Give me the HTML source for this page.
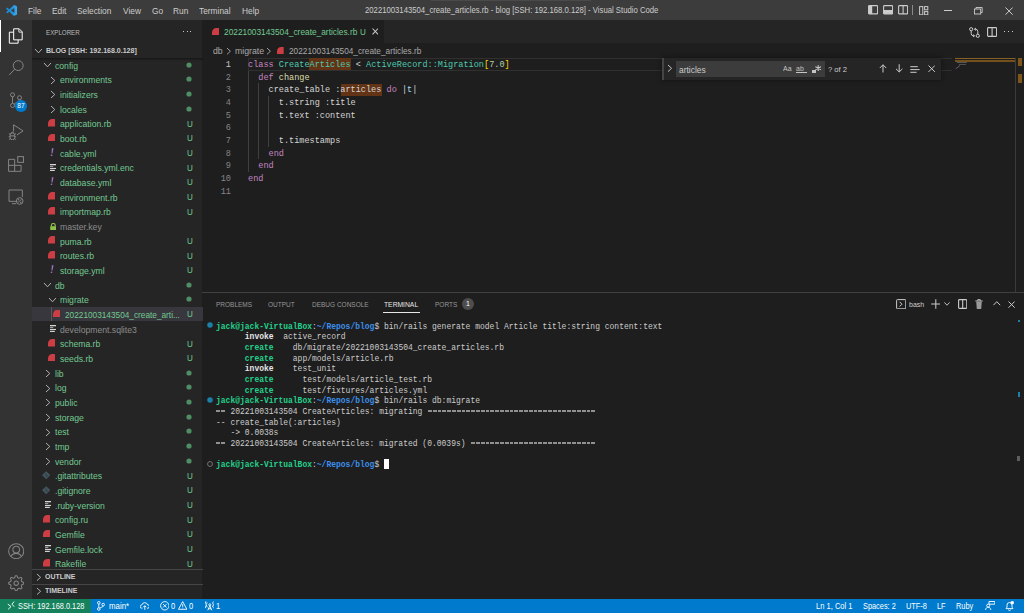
<!DOCTYPE html><html><head><meta charset="utf-8"><style>html,body{margin:0;padding:0;width:1024px;height:613px;overflow:hidden;background:#1e1e1e;}svg{display:block}</style></head><body><div style="position:relative;width:1024px;height:613px;overflow:hidden">
<div style="position:absolute;left:0px;top:0px;width:1024px;height:20px;background:#3c3c3c;"></div>
<svg style="position:absolute;left:6px;top:4.7px;overflow:visible" width="11.2" height="10.9" viewBox="0 0 100 100"><defs><linearGradient id="vg" x1="0" x2="1" y1="0" y2="0"><stop offset="0" stop-color="#1b86d0"/><stop offset="0.5" stop-color="#1f8fd8"/><stop offset="1" stop-color="#3aaaf2"/></linearGradient></defs><path fill="url(#vg)" d="M96.46 10.79 75.86.87a6.23 6.23 0 0 0-7.1 1.2L29.35 38.04 12.19 25.01a4.16 4.16 0 0 0-5.32.24L1.36 30.26a4.17 4.17 0 0 0 0 6.16L16.25 50 1.35 63.58a4.17 4.17 0 0 0 0 6.16l5.51 5.01a4.16 4.16 0 0 0 5.32.24l17.16-13.03 39.41 35.96a6.22 6.22 0 0 0 7.1 1.2l20.6-9.91A6.25 6.25 0 0 0 100 83.59V16.41a6.25 6.25 0 0 0-3.54-5.62zM75.02 72.7 45.11 50l29.9-22.7z"/></svg>
<div style="position:absolute;left:28.299999999999997px;top:5.86px;height:11.27px;line-height:11.27px;font-family:'Liberation Sans', sans-serif;font-size:8.67px;color:#cccccc;font-weight:normal;white-space:pre;transform:scaleX(0.9631);transform-origin:0 50%;">File</div>
<div style="position:absolute;left:52.1px;top:5.86px;height:11.27px;line-height:11.27px;font-family:'Liberation Sans', sans-serif;font-size:8.67px;color:#cccccc;font-weight:normal;white-space:pre;transform:scaleX(0.9631);transform-origin:0 50%;">Edit</div>
<div style="position:absolute;left:77.2px;top:5.86px;height:11.27px;line-height:11.27px;font-family:'Liberation Sans', sans-serif;font-size:8.67px;color:#cccccc;font-weight:normal;white-space:pre;transform:scaleX(0.9631);transform-origin:0 50%;">Selection</div>
<div style="position:absolute;left:122.60000000000001px;top:5.86px;height:11.27px;line-height:11.27px;font-family:'Liberation Sans', sans-serif;font-size:8.67px;color:#cccccc;font-weight:normal;white-space:pre;transform:scaleX(0.9631);transform-origin:0 50%;">View</div>
<div style="position:absolute;left:151.9px;top:5.86px;height:11.27px;line-height:11.27px;font-family:'Liberation Sans', sans-serif;font-size:8.67px;color:#cccccc;font-weight:normal;white-space:pre;transform:scaleX(0.9631);transform-origin:0 50%;">Go</div>
<div style="position:absolute;left:173.4px;top:5.86px;height:11.27px;line-height:11.27px;font-family:'Liberation Sans', sans-serif;font-size:8.67px;color:#cccccc;font-weight:normal;white-space:pre;transform:scaleX(0.9631);transform-origin:0 50%;">Run</div>
<div style="position:absolute;left:198.9px;top:5.86px;height:11.27px;line-height:11.27px;font-family:'Liberation Sans', sans-serif;font-size:8.67px;color:#cccccc;font-weight:normal;white-space:pre;transform:scaleX(0.9631);transform-origin:0 50%;">Terminal</div>
<div style="position:absolute;left:242.20000000000002px;top:5.86px;height:11.27px;line-height:11.27px;font-family:'Liberation Sans', sans-serif;font-size:8.67px;color:#cccccc;font-weight:normal;white-space:pre;transform:scaleX(0.9631);transform-origin:0 50%;">Help</div>
<div style="position:absolute;left:365.2px;top:5.18px;height:11.44px;line-height:11.44px;font-family:'Liberation Sans', sans-serif;font-size:8.8px;color:#cccccc;font-weight:normal;white-space:pre;transform:scaleX(0.8773);transform-origin:0 50%;">20221003143504_create_articles.rb - blog [SSH: 192.168.0.128] - Visual Studio Code</div>
<div style="position:absolute;left:431px;top:0px;width:160px;height:1px;background:#4a4a4a;"></div>
<svg style="position:absolute;left:868px;top:5.3px;" width="10.3" height="9.6" viewBox="0 0 10.3 9.6"><rect x="0.6" y="0.6" width="9" height="8.3" fill="none" stroke="#cccccc" stroke-width="1.1" rx="0.6"/><rect x="0.6" y="0.6" width="3.6" height="8.3" fill="#cccccc"/></svg>
<svg style="position:absolute;left:883px;top:5.3px;" width="10.3" height="9.6" viewBox="0 0 10.3 9.6"><rect x="0.6" y="0.6" width="9" height="8.3" fill="none" stroke="#cccccc" stroke-width="1.1" rx="0.6"/><rect x="0.6" y="5" width="9" height="3.9" fill="#cccccc"/></svg>
<svg style="position:absolute;left:897.8px;top:5.3px;" width="10.3" height="9.6" viewBox="0 0 10.3 9.6"><rect x="0.6" y="0.6" width="9" height="8.3" fill="none" stroke="#cccccc" stroke-width="1.1" rx="0.6"/><line x1="5.1" y1="0.6" x2="5.1" y2="8.9" stroke="#cccccc" stroke-width="1.1"/></svg>
<div style="position:absolute;left:912.4px;top:4.8px;width:1px;height:10.4px;background:#8a8a8a;"></div>
<svg style="position:absolute;left:919px;top:5.5px;" width="9.5" height="9.5" viewBox="0 0 9.5 9.5"><rect x="0.6" y="0.6" width="3.2" height="8.2" fill="none" stroke="#cccccc" stroke-width="1"/><rect x="5.6" y="0.6" width="3.2" height="3.2" fill="none" stroke="#cccccc" stroke-width="1"/><rect x="5.6" y="5.6" width="3.2" height="3.2" fill="none" stroke="#cccccc" stroke-width="1"/></svg>
<div style="position:absolute;left:944px;top:10px;width:7.6px;height:0.9px;background:#cccccc;"></div>
<svg style="position:absolute;left:974px;top:7px;" width="9" height="7.5" viewBox="0 0 9 7.5"><rect x="0.5" y="2" width="6.2" height="5" fill="none" stroke="#cccccc" stroke-width="0.9"/><path d="M2 2 V0.5 H8.2 V5.5 H6.7" fill="none" stroke="#cccccc" stroke-width="0.9"/></svg>
<svg style="position:absolute;left:1004.8px;top:6.5px;" width="8.2" height="8.2" viewBox="0 0 8.2 8.2"><path d="M0.5 0.5 L7.7 7.7 M7.7 0.5 L0.5 7.7" stroke="#cccccc" stroke-width="1"/></svg>
<div style="position:absolute;left:0px;top:20px;width:32px;height:578.6px;background:#333333;"></div>
<div style="position:absolute;left:0px;top:20px;width:1.4px;height:32px;background:#ffffff;"></div>
<svg style="position:absolute;left:8px;top:28px;" width="16" height="16" viewBox="0 0 24 24"><g fill="none" stroke="#ffffff" stroke-width="1.5" stroke-linejoin="miter"><path d="M8.5 1.2 H16.8 L21.3 5.7 V17.8 H8.5 Z"/><path d="M16.3 1.4 V6.2 H21.1" stroke-width="1.2"/><path d="M7.5 6.3 H2 V22.8 H15.2 V17.8"/></g></svg>
<svg style="position:absolute;left:8px;top:60px;" width="16" height="16" viewBox="0 0 24 24"><g fill="none" stroke="#858585" stroke-width="1.5"><circle cx="15.3" cy="8.4" r="7.4"/><path d="M10 13.8 L1.8 22.6"/></g></svg>
<svg style="position:absolute;left:8px;top:92px;" width="16" height="16" viewBox="0 0 24 24"><g fill="none" stroke="#858585" stroke-width="1.5"><circle cx="6.8" cy="4.2" r="3"/><circle cx="17.3" cy="8.6" r="3"/><circle cx="6.8" cy="20.2" r="3"/><path d="M6.8 7.2 V17.2 M17.3 11.6 C17.3 15 12 15.5 9 18.3"/></g></svg>
<div style="position:absolute;left:15.2px;top:100px;width:11.6px;height:11.6px;border-radius:50%;background:#007acc;color:#fff;font-family:'Liberation Sans', sans-serif;font-size:6.6px;line-height:11.6px;text-align:center">87</div>
<svg style="position:absolute;left:8px;top:124px;" width="16" height="16" viewBox="0 0 24 24"><g fill="none" stroke="#858585" stroke-width="1.5" stroke-linejoin="miter"><path d="M8.4 11.2 V1.2 L22.6 10.4 L13.4 16.4"/><path d="M3.3 16.6 A3.3 3.3 0 0 1 9.9 16.6 V20.2 A3.3 3.6 0 0 1 3.3 20.2 Z M3.3 17.8 H9.9 M4.8 14.2 A1.8 1.8 0 0 1 8.4 14.2 M3.3 15.6 L1.2 14.4 M9.9 15.6 L12 14.4 M3.3 19.2 H1 M9.9 19.2 H12.2 M3.5 22 L1.4 23.2 M9.7 22 L11.8 23.2"/></g></svg>
<svg style="position:absolute;left:8px;top:156px;" width="16" height="16" viewBox="0 0 24 24"><g fill="none" stroke="#858585" stroke-width="1.5"><path d="M0.9 5 H10 V14 H19.6 V23 H0.9 Z M0.9 14 H10 V23"/><rect x="14.6" y="0.9" width="8.6" height="8.6"/></g></svg>
<svg style="position:absolute;left:8px;top:189px;" width="16" height="16" viewBox="0 0 24 24"><g fill="none" stroke="#858585" stroke-width="1.5"><path d="M14 18.5 H1.5 V1.5 H21.5 V12"/><path d="M6 22 H12"/><circle cx="17.5" cy="18" r="5"/><path d="M15 20.5 L20 15.5 M15.5 17 V15.5 H17 M19.5 19 V20.5 H18"/></g></svg>
<svg style="position:absolute;left:7.8px;top:542.9px;" width="16.4" height="16.4" viewBox="0 0 24 24"><g fill="none" stroke="#858585" stroke-width="1.5"><circle cx="12" cy="12" r="11"/><circle cx="12" cy="9.6" r="4.9"/><path d="M4.4 19.9 C5.8 16.2 8.8 15.2 12 15.2 C15.2 15.2 18.2 16.2 19.6 19.9"/></g></svg>
<svg style="position:absolute;left:7.8px;top:574.6px;" width="16.4" height="16.4" viewBox="0 0 24 24"><g fill="none" stroke="#858585" stroke-width="1.5" stroke-linejoin="round"><polygon points="10.92,1.05 13.08,1.05 14.41,4.06 15.91,4.68 18.98,3.50 20.50,5.02 19.32,8.09 19.94,9.59 22.95,10.92 22.95,13.08 19.94,14.41 19.32,15.91 20.50,18.98 18.98,20.50 15.91,19.32 14.41,19.94 13.08,22.95 10.92,22.95 9.59,19.94 8.09,19.32 5.02,20.50 3.50,18.98 4.68,15.91 4.06,14.41 1.05,13.08 1.05,10.92 4.06,9.59 4.68,8.09 3.50,5.02 5.02,3.50 8.09,4.68 9.59,4.06"/><circle cx="12" cy="12" r="3.2"/></g></svg>
<div style="position:absolute;left:32px;top:20px;width:170.4px;height:578.6px;background:#252526;"></div>
<div style="position:absolute;left:45.8px;top:27.76px;height:10.27px;line-height:10.27px;font-family:'Liberation Sans', sans-serif;font-size:7.9px;color:#bbbbbb;font-weight:normal;white-space:pre;transform:scaleX(0.7848);transform-origin:0 50%;">EXPLORER</div>
<div style="position:absolute;left:182.95px;top:30.9px;width:1.15px;height:1.15px;background:#c5c5c5;"></div>
<div style="position:absolute;left:186.85px;top:30.9px;width:1.15px;height:1.15px;background:#c5c5c5;"></div>
<div style="position:absolute;left:190.35px;top:30.9px;width:1.15px;height:1.15px;background:#c5c5c5;"></div>
<svg style="position:absolute;left:34.1px;top:47.6px;" width="9.0" height="5.8" viewBox="0 0 9.0 5.8"><path d="M1 1 L4.5 4.8 L8.0 1" fill="none" stroke="#b8b8b8" stroke-width="0.95"/></svg>
<div style="position:absolute;left:45.7px;top:45.77px;height:10.27px;line-height:10.27px;font-family:'Liberation Sans', sans-serif;font-size:7.9px;color:#cccccc;font-weight:bold;white-space:pre;transform:scaleX(0.8924);transform-origin:0 50%;">BLOG [SSH: 192.168.0.128]</div>
<div style="position:absolute;left:32px;top:57.9px;width:171px;height:511.4px;overflow:hidden">
<svg style="position:absolute;left:10.9px;top:4.5335px;" width="9.0" height="5.8" viewBox="0 0 9.0 5.8"><path d="M1 1 L4.5 4.8 L8.0 1" fill="none" stroke="#b8b8b8" stroke-width="0.95"/></svg>
<div style="position:absolute;left:23px;top:2.67px;height:11.34px;line-height:11.34px;font-family:'Liberation Sans', sans-serif;font-size:8.72px;color:#73c991;font-weight:normal;white-space:pre;transform:scaleX(0.9900);transform-origin:0 50%;">config</div>
<svg style="position:absolute;left:153.5px;top:3.6334999999999997px;" width="6" height="6" viewBox="0 0 6 6"><circle cx="3" cy="3" r="2.6" fill="#4f8d62"/></svg>
<svg style="position:absolute;left:18.0px;top:17.8005px;" width="5.8" height="9.0" viewBox="0 0 5.8 9.0"><path d="M1 1 L4.8 4.5 L1 8.0" fill="none" stroke="#b8b8b8" stroke-width="0.95"/></svg>
<div style="position:absolute;left:28px;top:17.33px;height:11.34px;line-height:11.34px;font-family:'Liberation Sans', sans-serif;font-size:8.72px;color:#73c991;font-weight:normal;white-space:pre;transform:scaleX(0.9900);transform-origin:0 50%;">environments</div>
<svg style="position:absolute;left:153.5px;top:18.3005px;" width="6" height="6" viewBox="0 0 6 6"><circle cx="3" cy="3" r="2.6" fill="#4f8d62"/></svg>
<svg style="position:absolute;left:18.0px;top:32.467499999999994px;" width="5.8" height="9.0" viewBox="0 0 5.8 9.0"><path d="M1 1 L4.8 4.5 L1 8.0" fill="none" stroke="#b8b8b8" stroke-width="0.95"/></svg>
<div style="position:absolute;left:28px;top:32.00px;height:11.34px;line-height:11.34px;font-family:'Liberation Sans', sans-serif;font-size:8.72px;color:#73c991;font-weight:normal;white-space:pre;transform:scaleX(0.9900);transform-origin:0 50%;">initializers</div>
<svg style="position:absolute;left:153.5px;top:32.967499999999994px;" width="6" height="6" viewBox="0 0 6 6"><circle cx="3" cy="3" r="2.6" fill="#4f8d62"/></svg>
<svg style="position:absolute;left:18.0px;top:47.134499999999996px;" width="5.8" height="9.0" viewBox="0 0 5.8 9.0"><path d="M1 1 L4.8 4.5 L1 8.0" fill="none" stroke="#b8b8b8" stroke-width="0.95"/></svg>
<div style="position:absolute;left:28px;top:46.67px;height:11.34px;line-height:11.34px;font-family:'Liberation Sans', sans-serif;font-size:8.72px;color:#73c991;font-weight:normal;white-space:pre;transform:scaleX(0.9900);transform-origin:0 50%;">locales</div>
<svg style="position:absolute;left:153.5px;top:47.634499999999996px;" width="6" height="6" viewBox="0 0 6 6"><circle cx="3" cy="3" r="2.6" fill="#4f8d62"/></svg>
<svg style="position:absolute;left:16.1px;top:61.101499999999994px" width="7.0" height="7.6" viewBox="0 0 7 7.6" preserveAspectRatio="none"><path d="M0 7.6 V4.6 C0 2.1 1.9 0 4.3 0 H6.6 Q7 0 7 0.4 V7.6 Z" fill="#cc3e44"/></svg>
<div style="position:absolute;left:28px;top:61.33px;height:11.34px;line-height:11.34px;font-family:'Liberation Sans', sans-serif;font-size:8.72px;color:#73c991;font-weight:normal;white-space:pre;transform:scaleX(0.9900);transform-origin:0 50%;">application.rb</div>
<div style="position:absolute;left:154.5px;top:59.69px;height:12.22px;line-height:12.22px;font-family:'Liberation Sans', sans-serif;font-size:9.4px;color:#73c991;font-weight:normal;white-space:pre;transform:scaleX(0.8600);transform-origin:0 50%;">U</div>
<svg style="position:absolute;left:16.1px;top:75.76849999999999px" width="7.0" height="7.6" viewBox="0 0 7 7.6" preserveAspectRatio="none"><path d="M0 7.6 V4.6 C0 2.1 1.9 0 4.3 0 H6.6 Q7 0 7 0.4 V7.6 Z" fill="#cc3e44"/></svg>
<div style="position:absolute;left:28px;top:76.00px;height:11.34px;line-height:11.34px;font-family:'Liberation Sans', sans-serif;font-size:8.72px;color:#73c991;font-weight:normal;white-space:pre;transform:scaleX(0.9900);transform-origin:0 50%;">boot.rb</div>
<div style="position:absolute;left:154.5px;top:74.36px;height:12.22px;line-height:12.22px;font-family:'Liberation Sans', sans-serif;font-size:9.4px;color:#73c991;font-weight:normal;white-space:pre;transform:scaleX(0.8600);transform-origin:0 50%;">U</div>
<svg style="position:absolute;left:17.8px;top:90.0355px;" width="4" height="8.4" viewBox="0 0 4 8.4"><path d="M1.9 0.3 L3.5 0.3 L2.5 5.6 L1.5 5.6 Z" fill="#a074c4"/><ellipse cx="1.55" cy="7.3" rx="0.9" ry="0.8" fill="#a074c4"/></svg>
<div style="position:absolute;left:28px;top:90.67px;height:11.34px;line-height:11.34px;font-family:'Liberation Sans', sans-serif;font-size:8.72px;color:#73c991;font-weight:normal;white-space:pre;transform:scaleX(0.9900);transform-origin:0 50%;">cable.yml</div>
<div style="position:absolute;left:154.5px;top:89.03px;height:12.22px;line-height:12.22px;font-family:'Liberation Sans', sans-serif;font-size:9.4px;color:#73c991;font-weight:normal;white-space:pre;transform:scaleX(0.8600);transform-origin:0 50%;">U</div>
<svg style="position:absolute;left:17.8px;top:106.2025px;" width="6.6" height="7.2" viewBox="0 0 6.6 7.2"><g fill="#d4d7d6"><rect x="0" y="0" width="6.2" height="1.3"/><rect x="0" y="2" width="3.3" height="1.1" fill="#9a9a9a"/><rect x="0" y="3.9" width="6.2" height="1.1"/><rect x="0" y="5.8" width="4.8" height="1.2"/></g></svg>
<div style="position:absolute;left:28px;top:105.33px;height:11.34px;line-height:11.34px;font-family:'Liberation Sans', sans-serif;font-size:8.72px;color:#73c991;font-weight:normal;white-space:pre;transform:scaleX(0.9900);transform-origin:0 50%;">credentials.yml.enc</div>
<div style="position:absolute;left:154.5px;top:103.69px;height:12.22px;line-height:12.22px;font-family:'Liberation Sans', sans-serif;font-size:9.4px;color:#73c991;font-weight:normal;white-space:pre;transform:scaleX(0.8600);transform-origin:0 50%;">U</div>
<svg style="position:absolute;left:17.8px;top:119.3695px;" width="4" height="8.4" viewBox="0 0 4 8.4"><path d="M1.9 0.3 L3.5 0.3 L2.5 5.6 L1.5 5.6 Z" fill="#a074c4"/><ellipse cx="1.55" cy="7.3" rx="0.9" ry="0.8" fill="#a074c4"/></svg>
<div style="position:absolute;left:28px;top:120.00px;height:11.34px;line-height:11.34px;font-family:'Liberation Sans', sans-serif;font-size:8.72px;color:#73c991;font-weight:normal;white-space:pre;transform:scaleX(0.9900);transform-origin:0 50%;">database.yml</div>
<div style="position:absolute;left:154.5px;top:118.36px;height:12.22px;line-height:12.22px;font-family:'Liberation Sans', sans-serif;font-size:9.4px;color:#73c991;font-weight:normal;white-space:pre;transform:scaleX(0.8600);transform-origin:0 50%;">U</div>
<svg style="position:absolute;left:16.1px;top:134.43649999999997px" width="7.0" height="7.6" viewBox="0 0 7 7.6" preserveAspectRatio="none"><path d="M0 7.6 V4.6 C0 2.1 1.9 0 4.3 0 H6.6 Q7 0 7 0.4 V7.6 Z" fill="#cc3e44"/></svg>
<div style="position:absolute;left:28px;top:134.67px;height:11.34px;line-height:11.34px;font-family:'Liberation Sans', sans-serif;font-size:8.72px;color:#73c991;font-weight:normal;white-space:pre;transform:scaleX(0.9900);transform-origin:0 50%;">environment.rb</div>
<div style="position:absolute;left:154.5px;top:133.03px;height:12.22px;line-height:12.22px;font-family:'Liberation Sans', sans-serif;font-size:9.4px;color:#73c991;font-weight:normal;white-space:pre;transform:scaleX(0.8600);transform-origin:0 50%;">U</div>
<svg style="position:absolute;left:16.1px;top:149.10349999999997px" width="7.0" height="7.6" viewBox="0 0 7 7.6" preserveAspectRatio="none"><path d="M0 7.6 V4.6 C0 2.1 1.9 0 4.3 0 H6.6 Q7 0 7 0.4 V7.6 Z" fill="#cc3e44"/></svg>
<div style="position:absolute;left:28px;top:149.34px;height:11.34px;line-height:11.34px;font-family:'Liberation Sans', sans-serif;font-size:8.72px;color:#73c991;font-weight:normal;white-space:pre;transform:scaleX(0.9900);transform-origin:0 50%;">importmap.rb</div>
<div style="position:absolute;left:154.5px;top:147.69px;height:12.22px;line-height:12.22px;font-family:'Liberation Sans', sans-serif;font-size:9.4px;color:#73c991;font-weight:normal;white-space:pre;transform:scaleX(0.8600);transform-origin:0 50%;">U</div>
<svg style="position:absolute;left:17.7px;top:164.77049999999997px;" width="6.6" height="7.4" viewBox="0 0 6.6 7.4"><path d="M1.4 3.2 V2.4 A1.9 1.9 0 0 1 5.2 2.4 V3.2" fill="none" stroke="#8dc149" stroke-width="1.2"/><rect x="0.2" y="3.2" width="6.2" height="4.1" fill="#8dc149"/></svg>
<div style="position:absolute;left:28px;top:164.00px;height:11.34px;line-height:11.34px;font-family:'Liberation Sans', sans-serif;font-size:8.72px;color:#8c8c8c;font-weight:normal;white-space:pre;transform:scaleX(0.9900);transform-origin:0 50%;">master.key</div>
<svg style="position:absolute;left:16.1px;top:178.43749999999997px" width="7.0" height="7.6" viewBox="0 0 7 7.6" preserveAspectRatio="none"><path d="M0 7.6 V4.6 C0 2.1 1.9 0 4.3 0 H6.6 Q7 0 7 0.4 V7.6 Z" fill="#cc3e44"/></svg>
<div style="position:absolute;left:28px;top:178.67px;height:11.34px;line-height:11.34px;font-family:'Liberation Sans', sans-serif;font-size:8.72px;color:#73c991;font-weight:normal;white-space:pre;transform:scaleX(0.9900);transform-origin:0 50%;">puma.rb</div>
<div style="position:absolute;left:154.5px;top:177.03px;height:12.22px;line-height:12.22px;font-family:'Liberation Sans', sans-serif;font-size:9.4px;color:#73c991;font-weight:normal;white-space:pre;transform:scaleX(0.8600);transform-origin:0 50%;">U</div>
<svg style="position:absolute;left:16.1px;top:193.10449999999997px" width="7.0" height="7.6" viewBox="0 0 7 7.6" preserveAspectRatio="none"><path d="M0 7.6 V4.6 C0 2.1 1.9 0 4.3 0 H6.6 Q7 0 7 0.4 V7.6 Z" fill="#cc3e44"/></svg>
<div style="position:absolute;left:28px;top:193.34px;height:11.34px;line-height:11.34px;font-family:'Liberation Sans', sans-serif;font-size:8.72px;color:#73c991;font-weight:normal;white-space:pre;transform:scaleX(0.9900);transform-origin:0 50%;">routes.rb</div>
<div style="position:absolute;left:154.5px;top:191.69px;height:12.22px;line-height:12.22px;font-family:'Liberation Sans', sans-serif;font-size:9.4px;color:#73c991;font-weight:normal;white-space:pre;transform:scaleX(0.8600);transform-origin:0 50%;">U</div>
<svg style="position:absolute;left:17.8px;top:207.37149999999997px;" width="4" height="8.4" viewBox="0 0 4 8.4"><path d="M1.9 0.3 L3.5 0.3 L2.5 5.6 L1.5 5.6 Z" fill="#a074c4"/><ellipse cx="1.55" cy="7.3" rx="0.9" ry="0.8" fill="#a074c4"/></svg>
<div style="position:absolute;left:28px;top:208.00px;height:11.34px;line-height:11.34px;font-family:'Liberation Sans', sans-serif;font-size:8.72px;color:#73c991;font-weight:normal;white-space:pre;transform:scaleX(0.9900);transform-origin:0 50%;">storage.yml</div>
<div style="position:absolute;left:154.5px;top:206.36px;height:12.22px;line-height:12.22px;font-family:'Liberation Sans', sans-serif;font-size:9.4px;color:#73c991;font-weight:normal;white-space:pre;transform:scaleX(0.8600);transform-origin:0 50%;">U</div>
<svg style="position:absolute;left:10.9px;top:224.53849999999997px;" width="9.0" height="5.8" viewBox="0 0 9.0 5.8"><path d="M1 1 L4.5 4.8 L8.0 1" fill="none" stroke="#b8b8b8" stroke-width="0.95"/></svg>
<div style="position:absolute;left:23px;top:222.67px;height:11.34px;line-height:11.34px;font-family:'Liberation Sans', sans-serif;font-size:8.72px;color:#73c991;font-weight:normal;white-space:pre;transform:scaleX(0.9900);transform-origin:0 50%;">db</div>
<svg style="position:absolute;left:153.5px;top:223.6385px;" width="6" height="6" viewBox="0 0 6 6"><circle cx="3" cy="3" r="2.6" fill="#4f8d62"/></svg>
<svg style="position:absolute;left:15.899999999999999px;top:239.20549999999997px;" width="9.0" height="5.8" viewBox="0 0 9.0 5.8"><path d="M1 1 L4.5 4.8 L8.0 1" fill="none" stroke="#b8b8b8" stroke-width="0.95"/></svg>
<div style="position:absolute;left:28px;top:237.34px;height:11.34px;line-height:11.34px;font-family:'Liberation Sans', sans-serif;font-size:8.72px;color:#73c991;font-weight:normal;white-space:pre;transform:scaleX(0.9900);transform-origin:0 50%;">migrate</div>
<svg style="position:absolute;left:153.5px;top:238.3055px;" width="6" height="6" viewBox="0 0 6 6"><circle cx="3" cy="3" r="2.6" fill="#4f8d62"/></svg>
<div style="position:absolute;left:0px;top:248.889px;width:171px;height:14.267px;background:#37373d;"></div>
<div style="position:absolute;left:18.8px;top:248.889px;width:0.9px;height:14.267px;background:#585858;"></div>
<svg style="position:absolute;left:21.1px;top:251.7725px" width="7.0" height="7.6" viewBox="0 0 7 7.6" preserveAspectRatio="none"><path d="M0 7.6 V4.6 C0 2.1 1.9 0 4.3 0 H6.6 Q7 0 7 0.4 V7.6 Z" fill="#cc3e44"/></svg>
<div style="position:absolute;left:33px;top:252.00px;height:11.34px;line-height:11.34px;font-family:'Liberation Sans', sans-serif;font-size:8.72px;color:#73c991;font-weight:normal;white-space:pre;transform:scaleX(0.9480);transform-origin:0 50%;">20221003143504_create_arti...</div>
<div style="position:absolute;left:154.5px;top:250.36px;height:12.22px;line-height:12.22px;font-family:'Liberation Sans', sans-serif;font-size:9.4px;color:#73c991;font-weight:normal;white-space:pre;transform:scaleX(0.8600);transform-origin:0 50%;">U</div>
<svg style="position:absolute;left:17.8px;top:267.5395px;" width="6.6" height="7.2" viewBox="0 0 6.6 7.2"><g fill="#d4d7d6"><rect x="0" y="0" width="6.2" height="1.3"/><rect x="0" y="2" width="3.3" height="1.1" fill="#9a9a9a"/><rect x="0" y="3.9" width="6.2" height="1.1"/><rect x="0" y="5.8" width="4.8" height="1.2"/></g></svg>
<div style="position:absolute;left:28px;top:266.67px;height:11.34px;line-height:11.34px;font-family:'Liberation Sans', sans-serif;font-size:8.72px;color:#8c8c8c;font-weight:normal;white-space:pre;transform:scaleX(0.9900);transform-origin:0 50%;">development.sqlite3</div>
<svg style="position:absolute;left:16.1px;top:281.10650000000004px" width="7.0" height="7.6" viewBox="0 0 7 7.6" preserveAspectRatio="none"><path d="M0 7.6 V4.6 C0 2.1 1.9 0 4.3 0 H6.6 Q7 0 7 0.4 V7.6 Z" fill="#cc3e44"/></svg>
<div style="position:absolute;left:28px;top:281.34px;height:11.34px;line-height:11.34px;font-family:'Liberation Sans', sans-serif;font-size:8.72px;color:#73c991;font-weight:normal;white-space:pre;transform:scaleX(0.9900);transform-origin:0 50%;">schema.rb</div>
<div style="position:absolute;left:154.5px;top:279.70px;height:12.22px;line-height:12.22px;font-family:'Liberation Sans', sans-serif;font-size:9.4px;color:#73c991;font-weight:normal;white-space:pre;transform:scaleX(0.8600);transform-origin:0 50%;">U</div>
<svg style="position:absolute;left:16.1px;top:295.7735px" width="7.0" height="7.6" viewBox="0 0 7 7.6" preserveAspectRatio="none"><path d="M0 7.6 V4.6 C0 2.1 1.9 0 4.3 0 H6.6 Q7 0 7 0.4 V7.6 Z" fill="#cc3e44"/></svg>
<div style="position:absolute;left:28px;top:296.01px;height:11.34px;line-height:11.34px;font-family:'Liberation Sans', sans-serif;font-size:8.72px;color:#73c991;font-weight:normal;white-space:pre;transform:scaleX(0.9900);transform-origin:0 50%;">seeds.rb</div>
<div style="position:absolute;left:154.5px;top:294.36px;height:12.22px;line-height:12.22px;font-family:'Liberation Sans', sans-serif;font-size:9.4px;color:#73c991;font-weight:normal;white-space:pre;transform:scaleX(0.8600);transform-origin:0 50%;">U</div>
<svg style="position:absolute;left:13.0px;top:311.14050000000003px;" width="5.8" height="9.0" viewBox="0 0 5.8 9.0"><path d="M1 1 L4.8 4.5 L1 8.0" fill="none" stroke="#b8b8b8" stroke-width="0.95"/></svg>
<div style="position:absolute;left:23px;top:310.67px;height:11.34px;line-height:11.34px;font-family:'Liberation Sans', sans-serif;font-size:8.72px;color:#73c991;font-weight:normal;white-space:pre;transform:scaleX(0.9900);transform-origin:0 50%;">lib</div>
<svg style="position:absolute;left:153.5px;top:311.64050000000003px;" width="6" height="6" viewBox="0 0 6 6"><circle cx="3" cy="3" r="2.6" fill="#4f8d62"/></svg>
<svg style="position:absolute;left:13.0px;top:325.8075px;" width="5.8" height="9.0" viewBox="0 0 5.8 9.0"><path d="M1 1 L4.8 4.5 L1 8.0" fill="none" stroke="#b8b8b8" stroke-width="0.95"/></svg>
<div style="position:absolute;left:23px;top:325.34px;height:11.34px;line-height:11.34px;font-family:'Liberation Sans', sans-serif;font-size:8.72px;color:#73c991;font-weight:normal;white-space:pre;transform:scaleX(0.9900);transform-origin:0 50%;">log</div>
<svg style="position:absolute;left:153.5px;top:326.3075px;" width="6" height="6" viewBox="0 0 6 6"><circle cx="3" cy="3" r="2.6" fill="#4f8d62"/></svg>
<svg style="position:absolute;left:13.0px;top:340.47450000000003px;" width="5.8" height="9.0" viewBox="0 0 5.8 9.0"><path d="M1 1 L4.8 4.5 L1 8.0" fill="none" stroke="#b8b8b8" stroke-width="0.95"/></svg>
<div style="position:absolute;left:23px;top:340.01px;height:11.34px;line-height:11.34px;font-family:'Liberation Sans', sans-serif;font-size:8.72px;color:#73c991;font-weight:normal;white-space:pre;transform:scaleX(0.9900);transform-origin:0 50%;">public</div>
<svg style="position:absolute;left:153.5px;top:340.97450000000003px;" width="6" height="6" viewBox="0 0 6 6"><circle cx="3" cy="3" r="2.6" fill="#4f8d62"/></svg>
<svg style="position:absolute;left:13.0px;top:355.1415px;" width="5.8" height="9.0" viewBox="0 0 5.8 9.0"><path d="M1 1 L4.8 4.5 L1 8.0" fill="none" stroke="#b8b8b8" stroke-width="0.95"/></svg>
<div style="position:absolute;left:23px;top:354.67px;height:11.34px;line-height:11.34px;font-family:'Liberation Sans', sans-serif;font-size:8.72px;color:#73c991;font-weight:normal;white-space:pre;transform:scaleX(0.9900);transform-origin:0 50%;">storage</div>
<svg style="position:absolute;left:153.5px;top:355.6415px;" width="6" height="6" viewBox="0 0 6 6"><circle cx="3" cy="3" r="2.6" fill="#4f8d62"/></svg>
<svg style="position:absolute;left:13.0px;top:369.80850000000004px;" width="5.8" height="9.0" viewBox="0 0 5.8 9.0"><path d="M1 1 L4.8 4.5 L1 8.0" fill="none" stroke="#b8b8b8" stroke-width="0.95"/></svg>
<div style="position:absolute;left:23px;top:369.34px;height:11.34px;line-height:11.34px;font-family:'Liberation Sans', sans-serif;font-size:8.72px;color:#73c991;font-weight:normal;white-space:pre;transform:scaleX(0.9900);transform-origin:0 50%;">test</div>
<svg style="position:absolute;left:153.5px;top:370.30850000000004px;" width="6" height="6" viewBox="0 0 6 6"><circle cx="3" cy="3" r="2.6" fill="#4f8d62"/></svg>
<svg style="position:absolute;left:13.0px;top:384.4755px;" width="5.8" height="9.0" viewBox="0 0 5.8 9.0"><path d="M1 1 L4.8 4.5 L1 8.0" fill="none" stroke="#b8b8b8" stroke-width="0.95"/></svg>
<div style="position:absolute;left:23px;top:384.01px;height:11.34px;line-height:11.34px;font-family:'Liberation Sans', sans-serif;font-size:8.72px;color:#73c991;font-weight:normal;white-space:pre;transform:scaleX(0.9900);transform-origin:0 50%;">tmp</div>
<svg style="position:absolute;left:153.5px;top:384.9755px;" width="6" height="6" viewBox="0 0 6 6"><circle cx="3" cy="3" r="2.6" fill="#4f8d62"/></svg>
<svg style="position:absolute;left:13.0px;top:399.14250000000004px;" width="5.8" height="9.0" viewBox="0 0 5.8 9.0"><path d="M1 1 L4.8 4.5 L1 8.0" fill="none" stroke="#b8b8b8" stroke-width="0.95"/></svg>
<div style="position:absolute;left:23px;top:398.67px;height:11.34px;line-height:11.34px;font-family:'Liberation Sans', sans-serif;font-size:8.72px;color:#73c991;font-weight:normal;white-space:pre;transform:scaleX(0.9900);transform-origin:0 50%;">vendor</div>
<svg style="position:absolute;left:153.5px;top:399.64250000000004px;" width="6" height="6" viewBox="0 0 6 6"><circle cx="3" cy="3" r="2.6" fill="#4f8d62"/></svg>
<svg style="position:absolute;left:10.1px;top:413.2095px;" width="8.4" height="8.4" viewBox="0 0 8.4 8.4"><rect x="1.25" y="1.25" width="5.9" height="5.9" rx="0.5" transform="rotate(45 4.2 4.2)" fill="#41535b"/><path d="M3.2 2.8 L4.8 4.3 V6" stroke="#252526" stroke-width="0.6" fill="none"/></svg>
<div style="position:absolute;left:23px;top:413.34px;height:11.34px;line-height:11.34px;font-family:'Liberation Sans', sans-serif;font-size:8.72px;color:#73c991;font-weight:normal;white-space:pre;transform:scaleX(0.9900);transform-origin:0 50%;">.gitattributes</div>
<div style="position:absolute;left:154.5px;top:411.70px;height:12.22px;line-height:12.22px;font-family:'Liberation Sans', sans-serif;font-size:9.4px;color:#73c991;font-weight:normal;white-space:pre;transform:scaleX(0.8600);transform-origin:0 50%;">U</div>
<svg style="position:absolute;left:10.1px;top:427.8765px;" width="8.4" height="8.4" viewBox="0 0 8.4 8.4"><rect x="1.25" y="1.25" width="5.9" height="5.9" rx="0.5" transform="rotate(45 4.2 4.2)" fill="#41535b"/><path d="M3.2 2.8 L4.8 4.3 V6" stroke="#252526" stroke-width="0.6" fill="none"/></svg>
<div style="position:absolute;left:23px;top:428.01px;height:11.34px;line-height:11.34px;font-family:'Liberation Sans', sans-serif;font-size:8.72px;color:#73c991;font-weight:normal;white-space:pre;transform:scaleX(0.9900);transform-origin:0 50%;">.gitignore</div>
<div style="position:absolute;left:154.5px;top:426.37px;height:12.22px;line-height:12.22px;font-family:'Liberation Sans', sans-serif;font-size:9.4px;color:#73c991;font-weight:normal;white-space:pre;transform:scaleX(0.8600);transform-origin:0 50%;">U</div>
<svg style="position:absolute;left:12.8px;top:443.5435px;" width="6.6" height="7.2" viewBox="0 0 6.6 7.2"><g fill="#d4d7d6"><rect x="0" y="0" width="6.2" height="1.3"/><rect x="0" y="2" width="3.3" height="1.1" fill="#9a9a9a"/><rect x="0" y="3.9" width="6.2" height="1.1"/><rect x="0" y="5.8" width="4.8" height="1.2"/></g></svg>
<div style="position:absolute;left:23px;top:442.68px;height:11.34px;line-height:11.34px;font-family:'Liberation Sans', sans-serif;font-size:8.72px;color:#73c991;font-weight:normal;white-space:pre;transform:scaleX(0.9900);transform-origin:0 50%;">.ruby-version</div>
<div style="position:absolute;left:154.5px;top:441.03px;height:12.22px;line-height:12.22px;font-family:'Liberation Sans', sans-serif;font-size:9.4px;color:#73c991;font-weight:normal;white-space:pre;transform:scaleX(0.8600);transform-origin:0 50%;">U</div>
<svg style="position:absolute;left:11.1px;top:457.11050000000006px" width="7.0" height="7.6" viewBox="0 0 7 7.6" preserveAspectRatio="none"><path d="M0 7.6 V4.6 C0 2.1 1.9 0 4.3 0 H6.6 Q7 0 7 0.4 V7.6 Z" fill="#cc3e44"/></svg>
<div style="position:absolute;left:23px;top:457.34px;height:11.34px;line-height:11.34px;font-family:'Liberation Sans', sans-serif;font-size:8.72px;color:#73c991;font-weight:normal;white-space:pre;transform:scaleX(0.9900);transform-origin:0 50%;">config.ru</div>
<div style="position:absolute;left:154.5px;top:455.70px;height:12.22px;line-height:12.22px;font-family:'Liberation Sans', sans-serif;font-size:9.4px;color:#73c991;font-weight:normal;white-space:pre;transform:scaleX(0.8600);transform-origin:0 50%;">U</div>
<svg style="position:absolute;left:11.1px;top:471.77750000000003px" width="7.0" height="7.6" viewBox="0 0 7 7.6" preserveAspectRatio="none"><path d="M0 7.6 V4.6 C0 2.1 1.9 0 4.3 0 H6.6 Q7 0 7 0.4 V7.6 Z" fill="#cc3e44"/></svg>
<div style="position:absolute;left:23px;top:472.01px;height:11.34px;line-height:11.34px;font-family:'Liberation Sans', sans-serif;font-size:8.72px;color:#73c991;font-weight:normal;white-space:pre;transform:scaleX(0.9900);transform-origin:0 50%;">Gemfile</div>
<div style="position:absolute;left:154.5px;top:470.37px;height:12.22px;line-height:12.22px;font-family:'Liberation Sans', sans-serif;font-size:9.4px;color:#73c991;font-weight:normal;white-space:pre;transform:scaleX(0.8600);transform-origin:0 50%;">U</div>
<svg style="position:absolute;left:12.8px;top:487.54449999999997px;" width="6.6" height="7.2" viewBox="0 0 6.6 7.2"><g fill="#d4d7d6"><rect x="0" y="0" width="6.2" height="1.3"/><rect x="0" y="2" width="3.3" height="1.1" fill="#9a9a9a"/><rect x="0" y="3.9" width="6.2" height="1.1"/><rect x="0" y="5.8" width="4.8" height="1.2"/></g></svg>
<div style="position:absolute;left:23px;top:486.68px;height:11.34px;line-height:11.34px;font-family:'Liberation Sans', sans-serif;font-size:8.72px;color:#73c991;font-weight:normal;white-space:pre;transform:scaleX(0.9900);transform-origin:0 50%;">Gemfile.lock</div>
<div style="position:absolute;left:154.5px;top:485.03px;height:12.22px;line-height:12.22px;font-family:'Liberation Sans', sans-serif;font-size:9.4px;color:#73c991;font-weight:normal;white-space:pre;transform:scaleX(0.8600);transform-origin:0 50%;">U</div>
<svg style="position:absolute;left:11.1px;top:501.11150000000004px" width="7.0" height="7.6" viewBox="0 0 7 7.6" preserveAspectRatio="none"><path d="M0 7.6 V4.6 C0 2.1 1.9 0 4.3 0 H6.6 Q7 0 7 0.4 V7.6 Z" fill="#cc3e44"/></svg>
<div style="position:absolute;left:23px;top:501.34px;height:11.34px;line-height:11.34px;font-family:'Liberation Sans', sans-serif;font-size:8.72px;color:#73c991;font-weight:normal;white-space:pre;transform:scaleX(0.9900);transform-origin:0 50%;">Rakefile</div>
<div style="position:absolute;left:154.5px;top:499.70px;height:12.22px;line-height:12.22px;font-family:'Liberation Sans', sans-serif;font-size:9.4px;color:#73c991;font-weight:normal;white-space:pre;transform:scaleX(0.8600);transform-origin:0 50%;">U</div>
</div>
<div style="position:absolute;left:32px;top:57.9px;width:171px;height:3px;background:linear-gradient(#00000066,#00000000)"></div>
<div style="position:absolute;left:32px;top:569.3px;width:171px;height:0.8px;background:#464647;"></div>
<div style="position:absolute;left:32px;top:584px;width:171px;height:0.8px;background:#464647;"></div>
<svg style="position:absolute;left:36.1px;top:572.7px;" width="5.6" height="8.6" viewBox="0 0 5.6 8.6"><path d="M1 1 L4.6 4.3 L1 7.6" fill="none" stroke="#b8b8b8" stroke-width="0.95"/></svg>
<div style="position:absolute;left:45.4px;top:572.06px;height:10.27px;line-height:10.27px;font-family:'Liberation Sans', sans-serif;font-size:7.9px;color:#cccccc;font-weight:bold;white-space:pre;transform:scaleX(0.8797);transform-origin:0 50%;">OUTLINE</div>
<svg style="position:absolute;left:36.1px;top:587.1px;" width="5.6" height="8.6" viewBox="0 0 5.6 8.6"><path d="M1 1 L4.6 4.3 L1 7.6" fill="none" stroke="#b8b8b8" stroke-width="0.95"/></svg>
<div style="position:absolute;left:45.4px;top:586.47px;height:10.27px;line-height:10.27px;font-family:'Liberation Sans', sans-serif;font-size:7.9px;color:#cccccc;font-weight:bold;white-space:pre;transform:scaleX(0.8797);transform-origin:0 50%;">TIMELINE</div>
<div style="position:absolute;left:202.4px;top:20px;width:821.6px;height:22.9px;background:#252526;"></div>
<div style="position:absolute;left:202.4px;top:20px;width:181.8px;height:22.9px;background:#1e1e1e;"></div>
<svg style="position:absolute;left:212.3px;top:27.6px" width="7.2" height="7.4" viewBox="0 0 7 7.6" preserveAspectRatio="none"><path d="M0 7.6 V4.6 C0 2.1 1.9 0 4.3 0 H6.6 Q7 0 7 0.4 V7.6 Z" fill="#cc3e44"/></svg>
<div style="position:absolute;left:224.1px;top:26.56px;height:11.27px;line-height:11.27px;font-family:'Liberation Sans', sans-serif;font-size:8.67px;color:#73c991;font-weight:normal;white-space:pre;transform:scaleX(0.9619);transform-origin:0 50%;">20221003143504_create_articles.rb</div>
<div style="position:absolute;left:360.2px;top:25.59px;height:12.22px;line-height:12.22px;font-family:'Liberation Sans', sans-serif;font-size:9.4px;color:#73c991;font-weight:normal;white-space:pre;transform:scaleX(0.8600);transform-origin:0 50%;">U</div>
<svg style="position:absolute;left:371.6px;top:28.0px;" width="6.6" height="6.8" viewBox="0 0 6.6 6.8"><path d="M0.5 0.5 L6.1 6.3 M6.1 0.5 L0.5 6.3" stroke="#cccccc" stroke-width="1.05"/></svg>
<svg style="position:absolute;left:968.8px;top:26.6px;" width="11" height="11" viewBox="0 0 11 11"><g fill="none" stroke="#cccccc" stroke-width="1"><circle cx="2.2" cy="2.2" r="1.6"/><circle cx="8.8" cy="8.8" r="1.6"/><path d="M2.2 3.8 V6.5 Q2.2 8.8 4.5 8.8 H5.5 M4 7.6 L5.5 8.8 L4 10"/><path d="M8.8 7.2 V4.5 Q8.8 2.2 6.5 2.2 H5.5 M7 1 L5.5 2.2 L7 3.4"/></g></svg>
<svg style="position:absolute;left:986.6px;top:27px;" width="10.2" height="10" viewBox="0 0 10.2 10"><rect x="0.6" y="0.6" width="9" height="8.8" rx="0.8" fill="none" stroke="#cccccc" stroke-width="1.1"/><line x1="5.1" y1="0.6" x2="5.1" y2="9.4" stroke="#cccccc" stroke-width="1.1"/></svg>
<div style="position:absolute;left:1004.3px;top:30.9px;width:1.2px;height:1.2px;background:#cccccc;"></div>
<div style="position:absolute;left:1008.0px;top:30.9px;width:1.2px;height:1.2px;background:#cccccc;"></div>
<div style="position:absolute;left:1011.7px;top:30.9px;width:1.2px;height:1.2px;background:#cccccc;"></div>
<div style="position:absolute;left:212.9px;top:46.06px;height:11.27px;line-height:11.27px;font-family:'Liberation Sans', sans-serif;font-size:8.67px;color:#a9a9a9;font-weight:normal;white-space:pre;transform:scaleX(1.0035);transform-origin:0 50%;">db</div>
<svg style="position:absolute;left:225.9px;top:46.599999999999994px;" width="5.4" height="8.4" viewBox="0 0 5.4 8.4"><path d="M1 1 L4.4 4.2 L1 7.4" fill="none" stroke="#a9a9a9" stroke-width="0.9"/></svg>
<div style="position:absolute;left:234.5px;top:46.06px;height:11.27px;line-height:11.27px;font-family:'Liberation Sans', sans-serif;font-size:8.67px;color:#a9a9a9;font-weight:normal;white-space:pre;transform:scaleX(1.0092);transform-origin:0 50%;">migrate</div>
<svg style="position:absolute;left:266.1px;top:46.599999999999994px;" width="5.4" height="8.4" viewBox="0 0 5.4 8.4"><path d="M1 1 L4.4 4.2 L1 7.4" fill="none" stroke="#a9a9a9" stroke-width="0.9"/></svg>
<svg style="position:absolute;left:277.4px;top:47.3px" width="6.7" height="7.0" viewBox="0 0 7 7.6" preserveAspectRatio="none"><path d="M0 7.6 V4.6 C0 2.1 1.9 0 4.3 0 H6.6 Q7 0 7 0.4 V7.6 Z" fill="#cc3e44"/></svg>
<div style="position:absolute;left:288.9px;top:46.06px;height:11.27px;line-height:11.27px;font-family:'Liberation Sans', sans-serif;font-size:8.67px;color:#a9a9a9;font-weight:normal;white-space:pre;transform:scaleX(0.9550);transform-origin:0 50%;">20221003143504_create_articles.rb</div>
<div style="position:absolute;left:248px;top:58.0px;width:703px;height:11.07px;border:0.8px solid #303030;border-right:none;box-sizing:content-box"></div>
<div style="position:absolute;left:309.0px;top:58.2px;width:41.8px;height:12.267px;background:#623314;"></div>
<div style="position:absolute;left:340.7px;top:83.534px;width:41.2px;height:12.267px;background:#623314;"></div>
<div style="position:absolute;left:248.3px;top:70.667px;width:0.8px;height:101.336px;background:#404040;"></div>
<div style="position:absolute;left:258.1px;top:83.334px;width:0.8px;height:76.002px;background:#404040;"></div>
<div style="position:absolute;left:268.2px;top:96.001px;width:0.8px;height:50.668px;background:#404040;"></div>
<div style="position:absolute;left:200px;width:31px;text-align:right;top:58.93px;height:12px;line-height:12px;font-family:'Liberation Mono', monospace;font-size:8.55px;color:#c6c6c6;white-space:pre">1</div>
<div style="position:absolute;left:248.0px;top:58.93px;height:12px;line-height:12px;font-family:'Liberation Mono', monospace;font-size:9.33px;white-space:pre;transform:scaleX(0.9164);transform-origin:0 50%"><span style="color:#c586c0">class</span><span style="color:#d4d4d4"> </span><span style="color:#4ec9b0">CreateArticles</span><span style="color:#d4d4d4"> &lt; </span><span style="color:#4ec9b0">ActiveRecord::Migration</span><span style="color:#ffd700">[</span><span style="color:#b5cea8">7.0</span><span style="color:#ffd700">]</span></div>
<div style="position:absolute;left:200px;width:31px;text-align:right;top:71.60px;height:12px;line-height:12px;font-family:'Liberation Mono', monospace;font-size:8.55px;color:#858585;white-space:pre">2</div>
<div style="position:absolute;left:248.0px;top:71.60px;height:12px;line-height:12px;font-family:'Liberation Mono', monospace;font-size:9.33px;white-space:pre;transform:scaleX(0.9164);transform-origin:0 50%"><span style="color:#d4d4d4">  </span><span style="color:#c586c0">def</span><span style="color:#d4d4d4"> </span><span style="color:#dcdcaa">change</span></div>
<div style="position:absolute;left:200px;width:31px;text-align:right;top:84.27px;height:12px;line-height:12px;font-family:'Liberation Mono', monospace;font-size:8.55px;color:#858585;white-space:pre">3</div>
<div style="position:absolute;left:248.0px;top:84.27px;height:12px;line-height:12px;font-family:'Liberation Mono', monospace;font-size:9.33px;white-space:pre;transform:scaleX(0.9164);transform-origin:0 50%"><span style="color:#d4d4d4">    create_table :articles </span><span style="color:#c586c0">do</span><span style="color:#d4d4d4"> |</span><span style="color:#9cdcfe">t</span><span style="color:#d4d4d4">|</span></div>
<div style="position:absolute;left:200px;width:31px;text-align:right;top:96.93px;height:12px;line-height:12px;font-family:'Liberation Mono', monospace;font-size:8.55px;color:#858585;white-space:pre">4</div>
<div style="position:absolute;left:248.0px;top:96.93px;height:12px;line-height:12px;font-family:'Liberation Mono', monospace;font-size:9.33px;white-space:pre;transform:scaleX(0.9164);transform-origin:0 50%"><span style="color:#d4d4d4">      t.string :title</span></div>
<div style="position:absolute;left:200px;width:31px;text-align:right;top:109.60px;height:12px;line-height:12px;font-family:'Liberation Mono', monospace;font-size:8.55px;color:#858585;white-space:pre">5</div>
<div style="position:absolute;left:248.0px;top:109.60px;height:12px;line-height:12px;font-family:'Liberation Mono', monospace;font-size:9.33px;white-space:pre;transform:scaleX(0.9164);transform-origin:0 50%"><span style="color:#d4d4d4">      t.text :content</span></div>
<div style="position:absolute;left:200px;width:31px;text-align:right;top:122.27px;height:12px;line-height:12px;font-family:'Liberation Mono', monospace;font-size:8.55px;color:#858585;white-space:pre">6</div>
<div style="position:absolute;left:200px;width:31px;text-align:right;top:134.94px;height:12px;line-height:12px;font-family:'Liberation Mono', monospace;font-size:8.55px;color:#858585;white-space:pre">7</div>
<div style="position:absolute;left:248.0px;top:134.94px;height:12px;line-height:12px;font-family:'Liberation Mono', monospace;font-size:9.33px;white-space:pre;transform:scaleX(0.9164);transform-origin:0 50%"><span style="color:#d4d4d4">      t.timestamps</span></div>
<div style="position:absolute;left:200px;width:31px;text-align:right;top:147.60px;height:12px;line-height:12px;font-family:'Liberation Mono', monospace;font-size:8.55px;color:#858585;white-space:pre">8</div>
<div style="position:absolute;left:248.0px;top:147.60px;height:12px;line-height:12px;font-family:'Liberation Mono', monospace;font-size:9.33px;white-space:pre;transform:scaleX(0.9164);transform-origin:0 50%"><span style="color:#d4d4d4">    </span><span style="color:#c586c0">end</span></div>
<div style="position:absolute;left:200px;width:31px;text-align:right;top:160.27px;height:12px;line-height:12px;font-family:'Liberation Mono', monospace;font-size:8.55px;color:#858585;white-space:pre">9</div>
<div style="position:absolute;left:248.0px;top:160.27px;height:12px;line-height:12px;font-family:'Liberation Mono', monospace;font-size:9.33px;white-space:pre;transform:scaleX(0.9164);transform-origin:0 50%"><span style="color:#d4d4d4">  </span><span style="color:#c586c0">end</span></div>
<div style="position:absolute;left:200px;width:31px;text-align:right;top:172.94px;height:12px;line-height:12px;font-family:'Liberation Mono', monospace;font-size:8.55px;color:#858585;white-space:pre">10</div>
<div style="position:absolute;left:248.0px;top:172.94px;height:12px;line-height:12px;font-family:'Liberation Mono', monospace;font-size:9.33px;white-space:pre;transform:scaleX(0.9164);transform-origin:0 50%"><span style="color:#c586c0">end</span></div>
<div style="position:absolute;left:200px;width:31px;text-align:right;top:185.60px;height:12px;line-height:12px;font-family:'Liberation Mono', monospace;font-size:8.55px;color:#858585;white-space:pre">11</div>
<div style="position:absolute;left:955px;top:57.8px;width:60.2px;height:1.4px;background:#8a6124;"></div>
<div style="position:absolute;left:955px;top:60.0px;width:60.2px;height:1.5px;background:#74501c;"></div>
<div style="position:absolute;left:957px;top:61.8px;width:9.5px;height:1.2px;background:#555555;"></div>
<div style="position:absolute;left:958.5px;top:63.8px;width:7px;height:1.2px;background:#505050;"></div>
<svg style="position:absolute;left:954.5px;top:64.5px;" width="6" height="4.5" viewBox="0 0 6 4.5"><path d="M0.5 4 L5 0.5" stroke="#7a5a80" stroke-width="0.9"/></svg>
<div style="position:absolute;left:1015.2px;top:57.8px;width:0.8px;height:234.6px;background:#3b3b3b;"></div>
<div style="position:absolute;left:1017.9px;top:58px;width:4.3px;height:8.3px;background:#7f561c;"></div>
<div style="position:absolute;left:1017.9px;top:74px;width:4.3px;height:8.9px;background:#7f561c;"></div>
<div style="position:absolute;left:661.6px;top:58.3px;width:279.4px;height:21.6px;background:#252526;box-shadow:0 0 5px rgba(0,0,0,0.45)"></div>
<div style="position:absolute;left:661.6px;top:58.3px;width:2.2px;height:21.6px;background:#454545;"></div>
<svg style="position:absolute;left:667.0px;top:64.3px;" width="5.6" height="8.6" viewBox="0 0 5.6 8.6"><path d="M1 1 L4.6 4.3 L1 7.6" fill="none" stroke="#c5c5c5" stroke-width="1.0"/></svg>
<div style="position:absolute;left:676.2px;top:60.8px;width:148.6px;height:16.4px;background:#3c3c3c;"></div>
<div style="position:absolute;left:678.8px;top:64.66px;height:11.27px;line-height:11.27px;font-family:'Liberation Sans', sans-serif;font-size:8.67px;color:#cccccc;font-weight:normal;white-space:pre;transform:scaleX(0.9758);transform-origin:0 50%;">articles</div>
<div style="position:absolute;left:782.8px;top:64.36px;height:9.88px;line-height:9.88px;font-family:'Liberation Sans', sans-serif;font-size:7.6px;color:#c5c5c5;font-weight:normal;white-space:pre;transform:scaleX(0.9200);transform-origin:0 50%;">Aa</div>
<div style="position:absolute;left:796.4px;top:63.76px;height:9.88px;line-height:9.88px;font-family:'Liberation Sans', sans-serif;font-size:7.6px;color:#c5c5c5;font-weight:normal;white-space:pre;transform:scaleX(0.9200);transform-origin:0 50%;">ab</div>
<div style="position:absolute;left:796.0px;top:72.0px;width:11.4px;height:1.0px;background:#c5c5c5;"></div>
<div style="position:absolute;left:812.3px;top:70.0px;width:3.4px;height:3.2px;background:#c5c5c5;"></div>
<svg style="position:absolute;left:815.4px;top:64.8px;" width="6.4" height="6.4" viewBox="0 0 6.4 6.4"><g stroke="#c5c5c5" stroke-width="1.15" stroke-linecap="round"><path d="M3.2 0.6 V5.8 M0.9 1.9 L5.5 4.5 M5.5 1.9 L0.9 4.5"/></g></svg>
<div style="position:absolute;left:827.8px;top:65.10px;height:10.40px;line-height:10.40px;font-family:'Liberation Sans', sans-serif;font-size:8.0px;color:#cccccc;font-weight:normal;white-space:pre;transform:scaleX(0.9537);transform-origin:0 50%;">? of 2</div>
<svg style="position:absolute;left:878.6px;top:63.5px;" width="8" height="9" viewBox="0 0 8 9"><path d="M4 8.5 V0.8 M0.8 4 L4 0.8 L7.2 4" fill="none" stroke="#cccccc" stroke-width="1"/></svg>
<svg style="position:absolute;left:894.5px;top:63.8px;" width="8.4" height="9" viewBox="0 0 8.4 9"><path d="M4.2 0.2 V8 M1 4.8 L4.2 8 L7.4 4.8" fill="none" stroke="#cccccc" stroke-width="1"/></svg>
<svg style="position:absolute;left:910.4px;top:64.8px;" width="10" height="8" viewBox="0 0 10 8"><path d="M0.3 1.7 H7.8 M0.3 4.6 H9.6 M0.3 7.3 H6.6" fill="none" stroke="#cccccc" stroke-width="1"/></svg>
<svg style="position:absolute;left:927.5px;top:65.2px;" width="7.4" height="7.4" viewBox="0 0 7.4 7.4"><path d="M0.5 0.5 L6.9 6.9 M6.9 0.5 L0.5 6.9" stroke="#cccccc" stroke-width="1"/></svg>
<div style="position:absolute;left:202.4px;top:292.4px;width:821.6px;height:0.9px;background:#414141;"></div>
<div style="position:absolute;left:216.0px;top:299.50px;height:10.40px;line-height:10.40px;font-family:'Liberation Sans', sans-serif;font-size:8.0px;color:#979797;font-weight:normal;white-space:pre;transform:scaleX(0.8125);transform-origin:0 50%;">PROBLEMS</div>
<div style="position:absolute;left:267.9px;top:299.50px;height:10.40px;line-height:10.40px;font-family:'Liberation Sans', sans-serif;font-size:8.0px;color:#979797;font-weight:normal;white-space:pre;transform:scaleX(0.8125);transform-origin:0 50%;">OUTPUT</div>
<div style="position:absolute;left:311.5px;top:299.50px;height:10.40px;line-height:10.40px;font-family:'Liberation Sans', sans-serif;font-size:8.0px;color:#979797;font-weight:normal;white-space:pre;transform:scaleX(0.8125);transform-origin:0 50%;">DEBUG CONSOLE</div>
<div style="position:absolute;left:434.5px;top:299.50px;height:10.40px;line-height:10.40px;font-family:'Liberation Sans', sans-serif;font-size:8.0px;color:#979797;font-weight:normal;white-space:pre;transform:scaleX(0.8125);transform-origin:0 50%;">PORTS</div>
<div style="position:absolute;left:384.4px;top:299.50px;height:10.40px;line-height:10.40px;font-family:'Liberation Sans', sans-serif;font-size:8.0px;color:#e7e7e7;font-weight:normal;white-space:pre;transform:scaleX(0.8438);transform-origin:0 50%;">TERMINAL</div>
<div style="position:absolute;left:383.2px;top:311.8px;width:36.7px;height:1.1px;background:#e7e7e7;"></div>
<div style="position:absolute;left:461.7px;top:297.7px;width:12.4px;height:12.4px;border-radius:50%;background:#4d4d4d;color:#fff;font-family:'Liberation Sans', sans-serif;font-size:7px;line-height:12.4px;text-align:center">1</div>
<svg style="position:absolute;left:895.5px;top:299px;" width="10.4" height="10.4" viewBox="0 0 10.4 10.4"><rect x="0.6" y="0.6" width="9.2" height="9.2" rx="0.8" fill="none" stroke="#cccccc" stroke-width="1"/><path d="M3.6 2.8 L6 5.2 L3.6 7.6" fill="none" stroke="#cccccc" stroke-width="1"/></svg>
<div style="position:absolute;left:908.6px;top:300.14px;height:9.53px;line-height:9.53px;font-family:'Liberation Sans', sans-serif;font-size:7.33px;color:#cccccc;font-weight:normal;white-space:pre;transform:scaleX(0.9550);transform-origin:0 50%;">bash</div>
<svg style="position:absolute;left:930.8px;top:299px;" width="9.6" height="10" viewBox="0 0 9.6 10"><path d="M4.8 0.2 V9.8 M0.2 5 H9.4" stroke="#cccccc" stroke-width="1"/></svg>
<svg style="position:absolute;left:943.8px;top:302.3px;" width="6" height="4" viewBox="0 0 6 4"><path d="M0.4 0.4 L3 3.2 L5.6 0.4" fill="none" stroke="#cccccc" stroke-width="0.9"/></svg>
<svg style="position:absolute;left:957.8px;top:299.2px;" width="9.4" height="10" viewBox="0 0 9.4 10"><rect x="0.6" y="0.6" width="8.2" height="8.8" rx="0.8" fill="none" stroke="#cccccc" stroke-width="1.1"/><line x1="4.7" y1="0.6" x2="4.7" y2="9.4" stroke="#cccccc" stroke-width="1.1"/></svg>
<svg style="position:absolute;left:975.2px;top:298.8px;" width="8" height="10.6" viewBox="0 0 8 10.6"><path d="M0.3 2 H7.7 M2.8 2 V0.6 H5.2 V2" fill="none" stroke="#cccccc" stroke-width="0.9"/><path d="M1.2 2.5 L1.8 10 H6.2 L6.8 2.5 Z" fill="#9a9a9a"/></svg>
<svg style="position:absolute;left:993px;top:301.4px;" width="7.6" height="4.6" viewBox="0 0 7.6 4.6"><path d="M0.4 4.2 L3.8 0.7 L7.2 4.2" fill="none" stroke="#cccccc" stroke-width="1"/></svg>
<svg style="position:absolute;left:1007.8px;top:300.6px;" width="7.2" height="7.2" viewBox="0 0 7.2 7.2"><path d="M0.5 0.5 L6.7 6.7 M6.7 0.5 L0.5 6.7" stroke="#cccccc" stroke-width="1"/></svg>
<div style="position:absolute;left:215.9px;top:321.70px;height:11px;line-height:11px;font-family:'Liberation Mono', monospace;font-size:8.67px;white-space:pre;transform:scaleX(0.9239);transform-origin:0 50%"><span style="color:#23d18b;font-weight:bold">jack@jack-VirtualBox</span><span style="color:#cccccc;font-weight:normal">:</span><span style="color:#3b8eea;font-weight:bold">~/Repos/blog</span><span style="color:#cccccc;font-weight:normal">$ </span><span style="color:#cccccc;font-weight:normal">bin/rails generate model Article title:string content:text</span></div>
<div style="position:absolute;left:215.9px;top:332.37px;height:11px;line-height:11px;font-family:'Liberation Mono', monospace;font-size:8.67px;white-space:pre;transform:scaleX(0.9239);transform-origin:0 50%"><span style="color:#cccccc;font-weight:normal">      </span><span style="color:#e5e5e5;font-weight:bold">invoke</span><span style="color:#cccccc;font-weight:normal">  active_record</span></div>
<div style="position:absolute;left:215.9px;top:343.04px;height:11px;line-height:11px;font-family:'Liberation Mono', monospace;font-size:8.67px;white-space:pre;transform:scaleX(0.9239);transform-origin:0 50%"><span style="color:#cccccc;font-weight:normal">      </span><span style="color:#23d18b;font-weight:bold">create</span><span style="color:#cccccc;font-weight:normal">    db/migrate/20221003143504_create_articles.rb</span></div>
<div style="position:absolute;left:215.9px;top:353.71px;height:11px;line-height:11px;font-family:'Liberation Mono', monospace;font-size:8.67px;white-space:pre;transform:scaleX(0.9239);transform-origin:0 50%"><span style="color:#cccccc;font-weight:normal">      </span><span style="color:#23d18b;font-weight:bold">create</span><span style="color:#cccccc;font-weight:normal">    app/models/article.rb</span></div>
<div style="position:absolute;left:215.9px;top:364.38px;height:11px;line-height:11px;font-family:'Liberation Mono', monospace;font-size:8.67px;white-space:pre;transform:scaleX(0.9239);transform-origin:0 50%"><span style="color:#cccccc;font-weight:normal">      </span><span style="color:#e5e5e5;font-weight:bold">invoke</span><span style="color:#cccccc;font-weight:normal">    test_unit</span></div>
<div style="position:absolute;left:215.9px;top:375.05px;height:11px;line-height:11px;font-family:'Liberation Mono', monospace;font-size:8.67px;white-space:pre;transform:scaleX(0.9239);transform-origin:0 50%"><span style="color:#cccccc;font-weight:normal">      </span><span style="color:#23d18b;font-weight:bold">create</span><span style="color:#cccccc;font-weight:normal">      test/models/article_test.rb</span></div>
<div style="position:absolute;left:215.9px;top:385.72px;height:11px;line-height:11px;font-family:'Liberation Mono', monospace;font-size:8.67px;white-space:pre;transform:scaleX(0.9239);transform-origin:0 50%"><span style="color:#cccccc;font-weight:normal">      </span><span style="color:#23d18b;font-weight:bold">create</span><span style="color:#cccccc;font-weight:normal">      test/fixtures/articles.yml</span></div>
<div style="position:absolute;left:215.9px;top:396.39px;height:11px;line-height:11px;font-family:'Liberation Mono', monospace;font-size:8.67px;white-space:pre;transform:scaleX(0.9239);transform-origin:0 50%"><span style="color:#23d18b;font-weight:bold">jack@jack-VirtualBox</span><span style="color:#cccccc;font-weight:normal">:</span><span style="color:#3b8eea;font-weight:bold">~/Repos/blog</span><span style="color:#cccccc;font-weight:normal">$ </span><span style="color:#cccccc;font-weight:normal">bin/rails db:migrate</span></div>
<div style="position:absolute;left:216.45px;top:410.41px;width:3.8px;height:1.9px;background:#909090;"></div>
<div style="position:absolute;left:221.26px;top:410.41px;width:3.8px;height:1.9px;background:#909090;"></div>
<div style="position:absolute;left:427.91px;top:410.41px;width:3.8px;height:1.9px;background:#909090;"></div>
<div style="position:absolute;left:432.72px;top:410.41px;width:3.8px;height:1.9px;background:#909090;"></div>
<div style="position:absolute;left:437.53px;top:410.41px;width:3.8px;height:1.9px;background:#909090;"></div>
<div style="position:absolute;left:442.33px;top:410.41px;width:3.8px;height:1.9px;background:#909090;"></div>
<div style="position:absolute;left:447.14px;top:410.41px;width:3.8px;height:1.9px;background:#909090;"></div>
<div style="position:absolute;left:451.94px;top:410.41px;width:3.8px;height:1.9px;background:#909090;"></div>
<div style="position:absolute;left:456.75px;top:410.41px;width:3.8px;height:1.9px;background:#909090;"></div>
<div style="position:absolute;left:461.56px;top:410.41px;width:3.8px;height:1.9px;background:#909090;"></div>
<div style="position:absolute;left:466.36px;top:410.41px;width:3.8px;height:1.9px;background:#909090;"></div>
<div style="position:absolute;left:471.17px;top:410.41px;width:3.8px;height:1.9px;background:#909090;"></div>
<div style="position:absolute;left:475.97px;top:410.41px;width:3.8px;height:1.9px;background:#909090;"></div>
<div style="position:absolute;left:480.78px;top:410.41px;width:3.8px;height:1.9px;background:#909090;"></div>
<div style="position:absolute;left:485.59px;top:410.41px;width:3.8px;height:1.9px;background:#909090;"></div>
<div style="position:absolute;left:490.39px;top:410.41px;width:3.8px;height:1.9px;background:#909090;"></div>
<div style="position:absolute;left:495.2px;top:410.41px;width:3.8px;height:1.9px;background:#909090;"></div>
<div style="position:absolute;left:500.0px;top:410.41px;width:3.8px;height:1.9px;background:#909090;"></div>
<div style="position:absolute;left:504.81px;top:410.41px;width:3.8px;height:1.9px;background:#909090;"></div>
<div style="position:absolute;left:509.62px;top:410.41px;width:3.8px;height:1.9px;background:#909090;"></div>
<div style="position:absolute;left:514.42px;top:410.41px;width:3.8px;height:1.9px;background:#909090;"></div>
<div style="position:absolute;left:519.23px;top:410.41px;width:3.8px;height:1.9px;background:#909090;"></div>
<div style="position:absolute;left:524.03px;top:410.41px;width:3.8px;height:1.9px;background:#909090;"></div>
<div style="position:absolute;left:528.84px;top:410.41px;width:3.8px;height:1.9px;background:#909090;"></div>
<div style="position:absolute;left:533.65px;top:410.41px;width:3.8px;height:1.9px;background:#909090;"></div>
<div style="position:absolute;left:538.45px;top:410.41px;width:3.8px;height:1.9px;background:#909090;"></div>
<div style="position:absolute;left:543.26px;top:410.41px;width:3.8px;height:1.9px;background:#909090;"></div>
<div style="position:absolute;left:548.06px;top:410.41px;width:3.8px;height:1.9px;background:#909090;"></div>
<div style="position:absolute;left:552.87px;top:410.41px;width:3.8px;height:1.9px;background:#909090;"></div>
<div style="position:absolute;left:557.68px;top:410.41px;width:3.8px;height:1.9px;background:#909090;"></div>
<div style="position:absolute;left:562.48px;top:410.41px;width:3.8px;height:1.9px;background:#909090;"></div>
<div style="position:absolute;left:567.29px;top:410.41px;width:3.8px;height:1.9px;background:#909090;"></div>
<div style="position:absolute;left:572.09px;top:410.41px;width:3.8px;height:1.9px;background:#909090;"></div>
<div style="position:absolute;left:576.9px;top:410.41px;width:3.8px;height:1.9px;background:#909090;"></div>
<div style="position:absolute;left:581.71px;top:410.41px;width:3.8px;height:1.9px;background:#909090;"></div>
<div style="position:absolute;left:586.51px;top:410.41px;width:3.8px;height:1.9px;background:#909090;"></div>
<div style="position:absolute;left:591.32px;top:410.41px;width:3.8px;height:1.9px;background:#909090;"></div>
<div style="position:absolute;left:215.9px;top:407.06px;height:11px;line-height:11px;font-family:'Liberation Mono', monospace;font-size:8.67px;white-space:pre;transform:scaleX(0.9239);transform-origin:0 50%">  <span style="color:#cccccc;font-weight:normal"> 20221003143504 CreateArticles: migrating </span>                                   </div>
<div style="position:absolute;left:215.9px;top:417.73px;height:11px;line-height:11px;font-family:'Liberation Mono', monospace;font-size:8.67px;white-space:pre;transform:scaleX(0.9239);transform-origin:0 50%"><span style="color:#cccccc;font-weight:normal">-- create_table(:articles)</span></div>
<div style="position:absolute;left:215.9px;top:428.40px;height:11px;line-height:11px;font-family:'Liberation Mono', monospace;font-size:8.67px;white-space:pre;transform:scaleX(0.9239);transform-origin:0 50%"><span style="color:#cccccc;font-weight:normal">   -&gt; 0.0038s</span></div>
<div style="position:absolute;left:216.45px;top:442.42px;width:3.8px;height:1.9px;background:#909090;"></div>
<div style="position:absolute;left:221.26px;top:442.42px;width:3.8px;height:1.9px;background:#909090;"></div>
<div style="position:absolute;left:471.17px;top:442.42px;width:3.8px;height:1.9px;background:#909090;"></div>
<div style="position:absolute;left:475.97px;top:442.42px;width:3.8px;height:1.9px;background:#909090;"></div>
<div style="position:absolute;left:480.78px;top:442.42px;width:3.8px;height:1.9px;background:#909090;"></div>
<div style="position:absolute;left:485.59px;top:442.42px;width:3.8px;height:1.9px;background:#909090;"></div>
<div style="position:absolute;left:490.39px;top:442.42px;width:3.8px;height:1.9px;background:#909090;"></div>
<div style="position:absolute;left:495.2px;top:442.42px;width:3.8px;height:1.9px;background:#909090;"></div>
<div style="position:absolute;left:500.0px;top:442.42px;width:3.8px;height:1.9px;background:#909090;"></div>
<div style="position:absolute;left:504.81px;top:442.42px;width:3.8px;height:1.9px;background:#909090;"></div>
<div style="position:absolute;left:509.62px;top:442.42px;width:3.8px;height:1.9px;background:#909090;"></div>
<div style="position:absolute;left:514.42px;top:442.42px;width:3.8px;height:1.9px;background:#909090;"></div>
<div style="position:absolute;left:519.23px;top:442.42px;width:3.8px;height:1.9px;background:#909090;"></div>
<div style="position:absolute;left:524.03px;top:442.42px;width:3.8px;height:1.9px;background:#909090;"></div>
<div style="position:absolute;left:528.84px;top:442.42px;width:3.8px;height:1.9px;background:#909090;"></div>
<div style="position:absolute;left:533.65px;top:442.42px;width:3.8px;height:1.9px;background:#909090;"></div>
<div style="position:absolute;left:538.45px;top:442.42px;width:3.8px;height:1.9px;background:#909090;"></div>
<div style="position:absolute;left:543.26px;top:442.42px;width:3.8px;height:1.9px;background:#909090;"></div>
<div style="position:absolute;left:548.06px;top:442.42px;width:3.8px;height:1.9px;background:#909090;"></div>
<div style="position:absolute;left:552.87px;top:442.42px;width:3.8px;height:1.9px;background:#909090;"></div>
<div style="position:absolute;left:557.68px;top:442.42px;width:3.8px;height:1.9px;background:#909090;"></div>
<div style="position:absolute;left:562.48px;top:442.42px;width:3.8px;height:1.9px;background:#909090;"></div>
<div style="position:absolute;left:567.29px;top:442.42px;width:3.8px;height:1.9px;background:#909090;"></div>
<div style="position:absolute;left:572.09px;top:442.42px;width:3.8px;height:1.9px;background:#909090;"></div>
<div style="position:absolute;left:576.9px;top:442.42px;width:3.8px;height:1.9px;background:#909090;"></div>
<div style="position:absolute;left:581.71px;top:442.42px;width:3.8px;height:1.9px;background:#909090;"></div>
<div style="position:absolute;left:586.51px;top:442.42px;width:3.8px;height:1.9px;background:#909090;"></div>
<div style="position:absolute;left:591.32px;top:442.42px;width:3.8px;height:1.9px;background:#909090;"></div>
<div style="position:absolute;left:215.9px;top:439.07px;height:11px;line-height:11px;font-family:'Liberation Mono', monospace;font-size:8.67px;white-space:pre;transform:scaleX(0.9239);transform-origin:0 50%">  <span style="color:#cccccc;font-weight:normal"> 20221003143504 CreateArticles: migrated (0.0039s) </span>                          </div>
<div style="position:absolute;left:215.9px;top:460.41px;height:11px;line-height:11px;font-family:'Liberation Mono', monospace;font-size:8.67px;white-space:pre;transform:scaleX(0.9239);transform-origin:0 50%"><span style="color:#23d18b;font-weight:bold">jack@jack-VirtualBox</span><span style="color:#cccccc;font-weight:normal">:</span><span style="color:#3b8eea;font-weight:bold">~/Repos/blog</span><span style="color:#cccccc;font-weight:normal">$ </span></div>
<svg style="position:absolute;left:207.0px;top:322.0px;" width="6" height="6" viewBox="0 0 6 6"><circle cx="3" cy="3" r="2.75" fill="#1b81a8"/></svg>
<svg style="position:absolute;left:207.0px;top:397.09px;" width="6" height="6" viewBox="0 0 6 6"><circle cx="3" cy="3" r="2.75" fill="#1b81a8"/></svg>
<svg style="position:absolute;left:207.0px;top:460.51px;" width="6" height="6" viewBox="0 0 6 6"><circle cx="3" cy="3" r="2.45" fill="none" stroke="#7a7a7a" stroke-width="0.9"/></svg>
<div style="position:absolute;left:384.4px;top:458.8px;width:4.7px;height:10px;background:#ffffff;"></div>
<div style="position:absolute;left:1017.5px;top:319.8px;width:2px;height:2px;background:#1b81a8;"></div>
<div style="position:absolute;left:1017.5px;top:391.5px;width:2px;height:5px;background:#1b81a8;"></div>
<div style="position:absolute;left:1017.3px;top:456.0px;width:2.6px;height:4.6px;background:#5e5e5e;"></div>
<div style="position:absolute;left:0px;top:598.6px;width:1024px;height:14.4px;background:#007acc;"></div>
<div style="position:absolute;left:0px;top:598.6px;width:91.1px;height:14.4px;background:#16825d;"></div>
<svg style="position:absolute;left:7.4px;top:600.8px;" width="8" height="9.2" viewBox="0 0 8 9.2"><path d="M0.8 3.1 L4.0 5.6 L1.1 8.4 M7.2 0.6 L4.9 3.1 L7.2 5.7" fill="none" stroke="#ffffff" stroke-width="0.95"/></svg>
<div style="position:absolute;left:17.7px;top:601.11px;height:11.18px;line-height:11.18px;font-family:'Liberation Sans', sans-serif;font-size:8.6px;color:#ffffff;font-weight:normal;white-space:pre;transform:scaleX(0.8581);transform-origin:0 50%;">SSH: 192.168.0.128</div>
<svg style="position:absolute;left:97.3px;top:600.8px;" width="8" height="9.8" viewBox="0 0 8 9.8"><g fill="none" stroke="#ffffff" stroke-width="0.9"><circle cx="1.8" cy="1.8" r="1.3"/><circle cx="6.2" cy="3.6" r="1.3"/><circle cx="1.8" cy="8" r="1.3"/><path d="M1.8 3.1 V6.7 M6.2 4.9 C6.2 6.2 3.5 6.3 2.6 7"/></g></svg>
<div style="position:absolute;left:108.6px;top:601.11px;height:11.18px;line-height:11.18px;font-family:'Liberation Sans', sans-serif;font-size:8.6px;color:#ffffff;font-weight:normal;white-space:pre;transform:scaleX(0.9128);transform-origin:0 50%;">main*</div>
<svg style="position:absolute;left:139.7px;top:601.5px;" width="9.6" height="8" viewBox="0 0 9.6 8"><path d="M2.4 6.2 H1.8 A1.6 1.6 0 0 1 1.8 3 A3 3 0 0 1 7.6 2.8 A1.7 1.7 0 0 1 7.8 6.2 H7" fill="none" stroke="#ffffff" stroke-width="0.9"/><path d="M4.8 7.8 V3.8 M3.3 5.2 L4.8 3.7 L6.3 5.2" fill="none" stroke="#ffffff" stroke-width="0.9"/></svg>
<svg style="position:absolute;left:159.8px;top:601.3px;" width="9.6" height="9.6" viewBox="0 0 9.6 9.6"><circle cx="4.8" cy="4.8" r="4.2" fill="none" stroke="#ffffff" stroke-width="0.9"/><path d="M3.1 3.1 L6.5 6.5 M6.5 3.1 L3.1 6.5" stroke="#ffffff" stroke-width="0.9"/></svg>
<div style="position:absolute;left:170.6px;top:601.11px;height:11.18px;line-height:11.18px;font-family:'Liberation Sans', sans-serif;font-size:8.6px;color:#ffffff;font-weight:normal;white-space:pre;transform:scaleX(0.8721);transform-origin:0 50%;">0</div>
<svg style="position:absolute;left:178px;top:601.3px;" width="9.4" height="8.8" viewBox="0 0 9.4 8.8"><path d="M4.7 0.6 L8.9 8.3 H0.5 Z" fill="none" stroke="#ffffff" stroke-width="0.9" stroke-linejoin="round"/><path d="M4.7 3.2 V5.8 M4.7 6.6 V7.3" stroke="#ffffff" stroke-width="0.9"/></svg>
<div style="position:absolute;left:188.6px;top:601.11px;height:11.18px;line-height:11.18px;font-family:'Liberation Sans', sans-serif;font-size:8.6px;color:#ffffff;font-weight:normal;white-space:pre;transform:scaleX(0.8721);transform-origin:0 50%;">0</div>
<svg style="position:absolute;left:204.6px;top:601px;" width="9.6" height="9.6" viewBox="0 0 9.6 9.6"><g fill="none" stroke="#ffffff" stroke-width="0.9"><circle cx="4.8" cy="3.8" r="1"/><path d="M4.8 4.8 L2.8 9.3 M4.8 4.8 L6.8 9.3 M3.4 7.8 H6.2"/><path d="M2.2 1.4 A3.6 3.6 0 0 0 2.2 6.2 M7.4 1.4 A3.6 3.6 0 0 1 7.4 6.2 M0.9 0.4 A5.4 5.4 0 0 0 0.9 7.2 M8.7 0.4 A5.4 5.4 0 0 1 8.7 7.2"/></g></svg>
<div style="position:absolute;left:216px;top:601.11px;height:11.18px;line-height:11.18px;font-family:'Liberation Sans', sans-serif;font-size:8.6px;color:#ffffff;font-weight:normal;white-space:pre;transform:scaleX(0.8721);transform-origin:0 50%;">1</div>
<div style="position:absolute;left:815.8px;top:601.11px;height:11.18px;line-height:11.18px;font-family:'Liberation Sans', sans-serif;font-size:8.6px;color:#ffffff;font-weight:normal;white-space:pre;transform:scaleX(0.8779);transform-origin:0 50%;">Ln 1, Col 1</div>
<div style="position:absolute;left:862.5px;top:601.11px;height:11.18px;line-height:11.18px;font-family:'Liberation Sans', sans-serif;font-size:8.6px;color:#ffffff;font-weight:normal;white-space:pre;transform:scaleX(0.8581);transform-origin:0 50%;">Spaces: 2</div>
<div style="position:absolute;left:906.0px;top:601.11px;height:11.18px;line-height:11.18px;font-family:'Liberation Sans', sans-serif;font-size:8.6px;color:#ffffff;font-weight:normal;white-space:pre;transform:scaleX(0.8581);transform-origin:0 50%;">UTF-8</div>
<div style="position:absolute;left:937.3px;top:601.11px;height:11.18px;line-height:11.18px;font-family:'Liberation Sans', sans-serif;font-size:8.6px;color:#ffffff;font-weight:normal;white-space:pre;transform:scaleX(0.8581);transform-origin:0 50%;">LF</div>
<div style="position:absolute;left:955.9px;top:601.11px;height:11.18px;line-height:11.18px;font-family:'Liberation Sans', sans-serif;font-size:8.6px;color:#ffffff;font-weight:normal;white-space:pre;transform:scaleX(0.8581);transform-origin:0 50%;">Ruby</div>
<svg style="position:absolute;left:984.6px;top:601.2px;" width="10.4" height="9.4" viewBox="0 0 10.4 9.4"><g fill="none" stroke="#ffffff" stroke-width="0.9"><path d="M4 3.2 H9.8 V0.5 H4 Z"/><circle cx="3.2" cy="4.6" r="1.5"/><path d="M0.5 9 C0.8 6.8 2 6.3 3.2 6.3 C4.4 6.3 5.6 6.8 5.9 9"/></g></svg>
<svg style="position:absolute;left:1005.4px;top:600.8px;" width="9" height="10" viewBox="0 0 9 10"><path d="M1 7.6 H8 L7 6.2 V4 A2.5 2.5 0 0 0 2 4 V6.2 Z M3.5 8.6 A1 1 0 0 0 5.5 8.6" fill="none" stroke="#ffffff" stroke-width="0.9"/><circle cx="7.2" cy="1.8" r="1.8" fill="#ffffff"/></svg>
</div></body></html>
